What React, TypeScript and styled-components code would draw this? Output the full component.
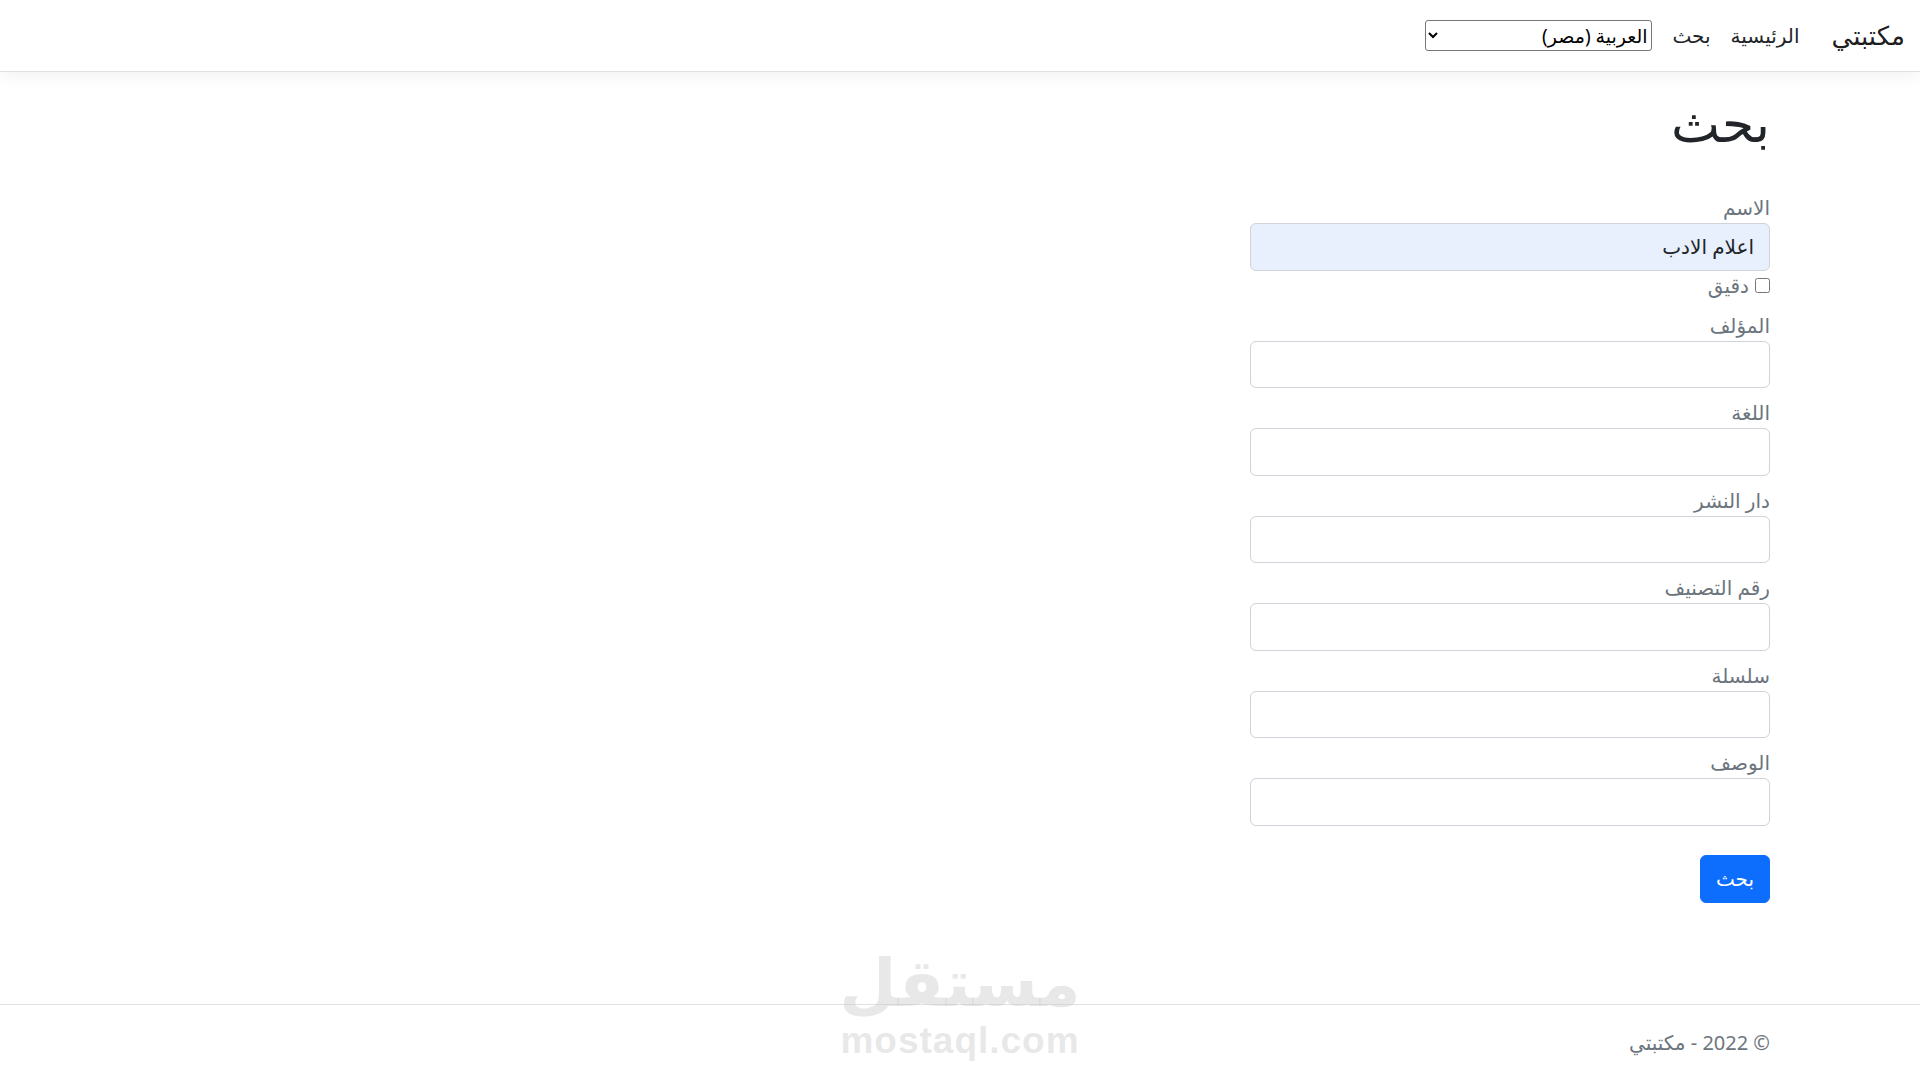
import styled, { createGlobalStyle } from "styled-components";

const GlobalStyle = createGlobalStyle`
  html, body {
    margin: 0;
    padding: 0;
    background: #ffffff;
    overflow: hidden;
  }
  body {
    font-family: "Noto Sans", "DejaVu Sans", sans-serif;
    color: #212529;
  }
  *, *::before, *::after {
    box-sizing: border-box;
  }
`;

const Page = styled.div`
  position: relative;
  min-height: 100vh;
  display: flex;
  flex-direction: column;
`;

const NavBar = styled.header`
  height: 72px;
  padding: 10px 15px;
  display: flex;
  align-items: center;
  background: #ffffff;
  border-bottom: 1px solid #dee2e6;
  box-shadow: 0 5px 15px rgba(0, 0, 0, 0.05);
`;

const Brand = styled.a`
  font-size: 26px;
  line-height: 37px;
  padding: 6px 0;
  margin-left: 22px;
  color: rgba(0, 0, 0, 0.9);
  text-decoration: none;
`;

const NavList = styled.ul`
  display: flex;
  align-items: center;
  list-style: none;
  margin: 0;
  padding: 0;
`;

const NavLink = styled.a`
  display: block;
  padding: 8px 10px;
  font-size: 20px;
  line-height: 30px;
  color: #212529;
  text-decoration: none;
`;

const LangSelect = styled.select`
  width: 227px;
  height: 31px;
  margin-right: 10px;
  font-family: "Noto Sans", "DejaVu Sans", sans-serif;
  font-size: 19px;
  color: #000;
  background: #fff;
  border: 1px solid #767676;
  border-radius: 3px;
`;

const Container = styled.div`
  width: 100%;
  max-width: 1650px;
  margin: 0 auto;
  padding: 0 15px;
`;

const Main = styled.main`
  flex: 1;
  padding-top: 20px;
`;

const Title = styled.h1`
  margin: 0 0 10px;
  font-size: 52px;
  font-weight: 500;
  line-height: 60px;
  color: #212529;
`;

const SearchForm = styled.form`
  width: 520px;
  margin-top: 41px;
`;

const Field = styled.div`
  margin-bottom: 10px;
`;

const Label = styled.label`
  display: block;
  font-size: 20px;
  line-height: 30px;
  color: #6c757d;
`;

const TextInput = styled.input<{ $filled?: boolean }>`
  display: block;
  width: 100%;
  height: 47.5px;
  padding: 7px 15px;
  font-family: "Noto Sans", "DejaVu Sans", sans-serif;
  font-size: 20px;
  color: #212529;
  background: ${props => props.$filled ? "#e8f0fe" : "#ffffff"};
  border: 1px solid #ced4da;
  border-radius: 6px;
  outline: none;
`;

const CheckRow = styled.div`
  display: flex;
  align-items: center;
  height: 30px;
  gap: 6px;
  font-size: 20px;
  color: #6c757d;

  input {
    width: 15px;
    height: 15px;
    margin: 0;
  }
`;

const SubmitButton = styled.button`
  margin-top: 19px;
  height: 48px;
  padding: 7px 15px;
  font-family: "Noto Sans", "DejaVu Sans", sans-serif;
  font-size: 20px;
  color: #ffffff;
  background: #0d6efd;
  border: 1px solid #0d6efd;
  border-radius: 6px;
`;

const Footer = styled.footer`
  height: 76px;
  border-top: 1px solid #dee2e6;
  font-size: 20px;
  line-height: 75px;
  color: #6c757d;
  white-space: nowrap;
`;

const Watermark = styled.div`
  position: absolute;
  left: 50%;
  bottom: 20px;
  transform: translateX(-50%);
  display: flex;
  flex-direction: column;
  align-items: center;
  color: rgba(200, 200, 200, 0.42);
  font-family: "DejaVu Sans", sans-serif;
  font-weight: bold;
  pointer-events: none;

  span:first-child {
    font-size: 66px;
    line-height: 76px;
  }
  span:last-child {
    font-family: "Liberation Sans", sans-serif;
    font-size: 37px;
    line-height: 38px;
    letter-spacing: 1px;
  }
`;

export default function App() {
  const navItems: { name: string, path: string }[] = [
    { name: "الرئيسية", path: "#" },
    { name: "بحث", path: "#" },
  ];

  const fields: string[] = ["المؤلف", "اللغة", "دار النشر", "رقم التصنيف", "سلسلة", "الوصف"];

  return (
    <Page dir="rtl">
      <GlobalStyle />
      <NavBar>
        <Brand href="#">مكتبتي</Brand>
        <NavList>
          {navItems.map((item, index) => (
            <li key={index}>
              <NavLink href={item.path}>{item.name}</NavLink>
            </li>
          ))}
        </NavList>
        <LangSelect defaultValue="ar-EG">
          <option value="ar-EG">العربية (مصر)</option>
          <option value="en-US">English (United States)</option>
        </LangSelect>
      </NavBar>
      <Main>
        <Container>
          <Title>بحث</Title>
          <SearchForm onSubmit={e => e.preventDefault()}>
            <Label htmlFor="name">الاسم</Label>
            <TextInput id="name" $filled defaultValue="اعلام الادب" />
            <Field>
              <CheckRow>
                <input type="checkbox" id="exact" />
                <label htmlFor="exact">دقيق</label>
              </CheckRow>
            </Field>
            {fields.map((name, index) => (
              <Field key={index}>
                <Label htmlFor={"f" + index}>{name}</Label>
                <TextInput id={"f" + index} />
              </Field>
            ))}
            <SubmitButton type="submit">بحث</SubmitButton>
          </SearchForm>
        </Container>
      </Main>
      <Footer>
        <Container>© 2022 - مكتبتي</Container>
      </Footer>
      <Watermark>
        <span>مستقل</span>
        <span>mostaql.com</span>
      </Watermark>
    </Page>
  );
}
